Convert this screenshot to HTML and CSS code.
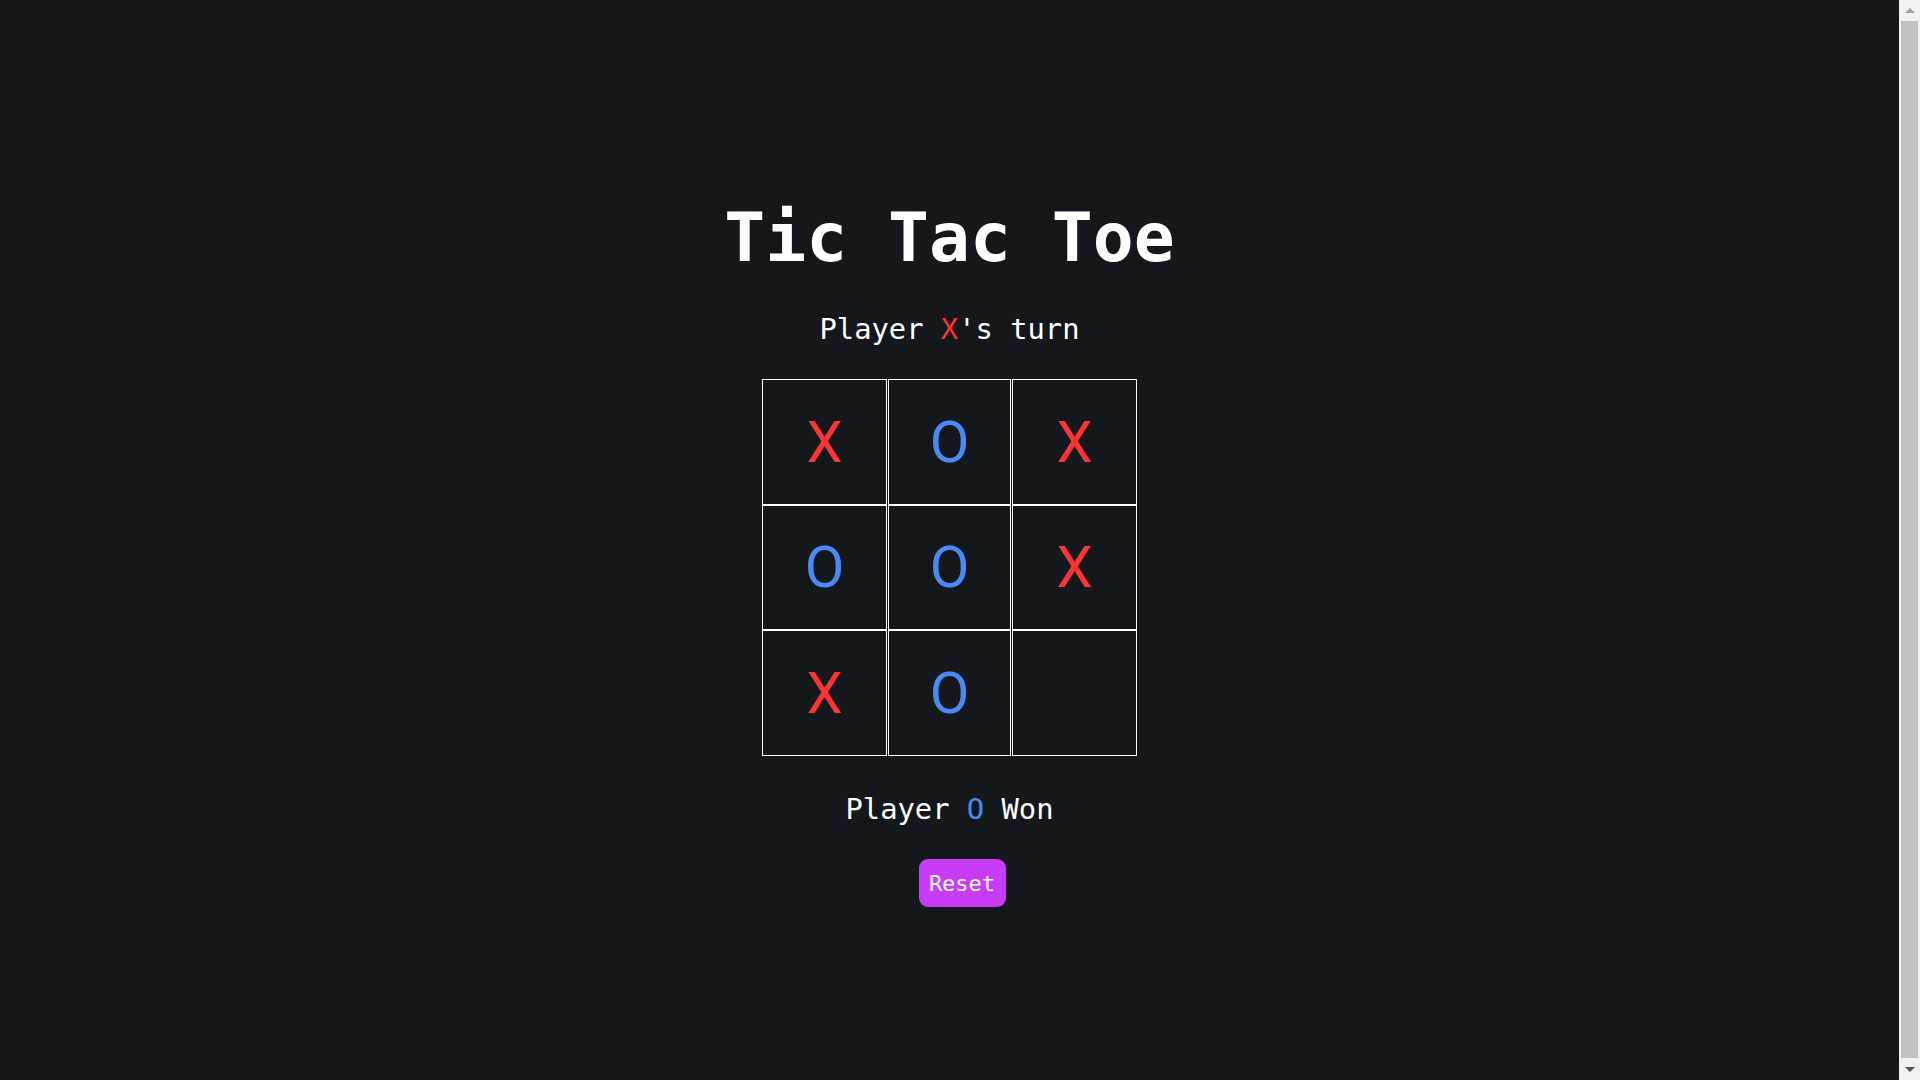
FILE: index.html
```html
<!DOCTYPE html>
<html lang="en">
<head>
<meta charset="utf-8">
<title>Tic Tac Toe</title>
<link rel="stylesheet" href="styles.css">
</head>
<body>
<main class="app">
  <h1 class="title">Tic Tac Toe</h1>
  <p class="status">Player <span class="x">X</span>'s turn</p>
  <div class="board">
    <div class="cell x">X</div>
    <div class="cell o">O</div>
    <div class="cell x">X</div>
    <div class="cell o">O</div>
    <div class="cell o">O</div>
    <div class="cell x">X</div>
    <div class="cell x">X</div>
    <div class="cell o">O</div>
    <div class="cell"></div>
  </div>
  <p class="status result">Player <span class="o">O</span> Won</p>
  <button class="reset" type="button">Reset</button>
</main>
<div class="scrollbar" aria-hidden="true">
  <div class="sb-btn sb-up"><span class="tri-up"></span></div>
  <div class="sb-track"><div class="sb-thumb"></div></div>
  <div class="sb-btn sb-down"><span class="tri-down"></span></div>
</div>
</body>
</html>
```

FILE: styles.css
```css
html, body {
  margin: 0;
  padding: 0;
  background: #14181d;
}

body {
  font-family: "DejaVu Sans Mono", monospace;
  color: #ffffff;
}

.app {
  min-height: 1080px;
  box-sizing: border-box;
  padding-top: 198px;
  padding-right: 21px;
  display: flex;
  flex-direction: column;
  align-items: center;
}

.title {
  margin: 0;
  font-size: 68px;
  line-height: 80px;
  font-weight: 700;
}

.status {
  margin: 33px 0 0;
  font-size: 28.8px;
  line-height: 36px;
}

.result {
  margin-top: 35px;
}

.x { color: #ff3333; }
.o { color: #4a8af4; }

.board {
  margin-top: 32px;
  display: grid;
  grid-template-columns: 125px 123px 125px;
  grid-template-rows: 126px 125px 126px;
  column-gap: 1px;
}

.cell {
  box-sizing: border-box;
  border: 1px solid #ffffff;
  display: flex;
  align-items: center;
  justify-content: center;
  font-family: Roboto, "Noto Sans", sans-serif;
  font-size: 57.6px;
}

.reset {
  margin-top: 32px;
  margin-left: 25px;
  width: 87px;
  height: 48px;
  padding: 0;
  border: none;
  border-radius: 9px;
  background: #c83cf7;
  color: #ffffff;
  font-family: "DejaVu Sans Mono", monospace;
  font-size: 22px;
  font-weight: 400;
  cursor: pointer;
}

/* fake browser scrollbar from the screenshot */
.scrollbar {
  position: fixed;
  top: 0;
  right: 0;
  width: 21px;
  height: 100vh;
  background: #f1f1f1;
  display: flex;
  flex-direction: column;
}

.sb-btn {
  height: 21px;
  display: flex;
  align-items: center;
  justify-content: center;
}

.sb-track {
  flex: 1;
  padding: 0 2px 1px;
  display: flex;
}

.sb-thumb {
  flex: 1;
  background: #c1c1c1;
}

.tri-up {
  width: 0;
  height: 0;
  border-left: 5px solid transparent;
  border-right: 5px solid transparent;
  border-bottom: 5px solid #a3a3a3;
}

.tri-down {
  width: 0;
  height: 0;
  border-left: 5px solid transparent;
  border-right: 5px solid transparent;
  border-top: 5px solid #505050;
}
```
